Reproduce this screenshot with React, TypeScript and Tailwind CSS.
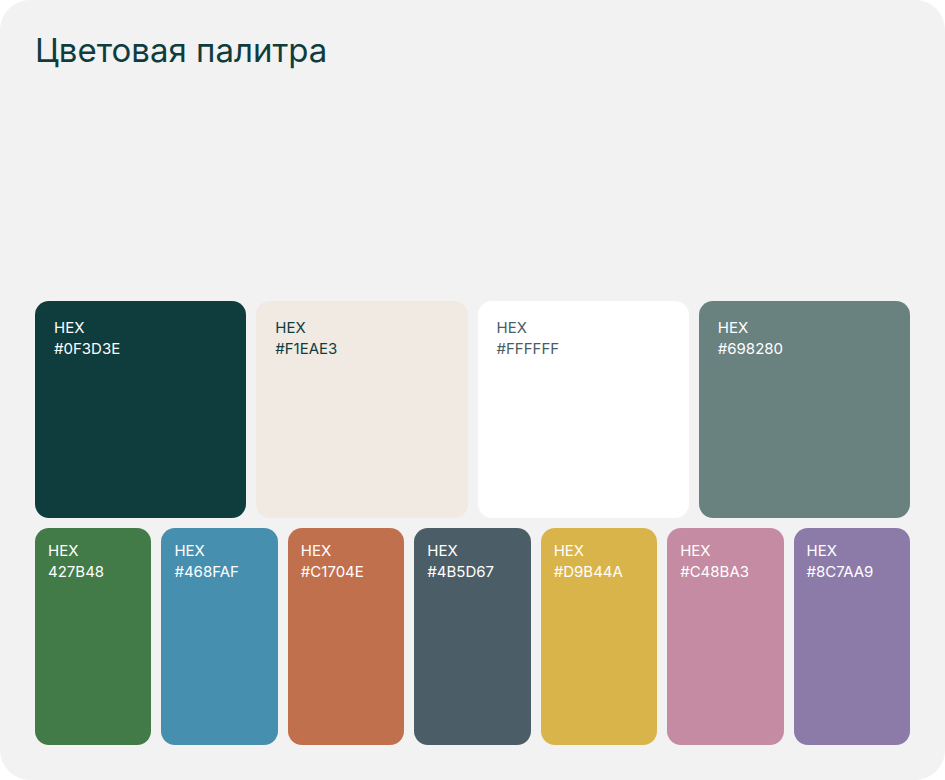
const top = [
  { hex: "#0F3D3E", bg: "bg-[#0f3d3e]", text: "text-white" },
  { hex: "#F1EAE3", bg: "bg-[#f1eae3]", text: "text-[#0f3d3e]" },
  { hex: "#FFFFFF", bg: "bg-white", text: "text-[#4b5d67]" },
  { hex: "#698280", bg: "bg-[#698280]", text: "text-white" },
];

const bottom = [
  { hex: "427B48", bg: "bg-[#427b48]" },
  { hex: "#468FAF", bg: "bg-[#468faf]" },
  { hex: "#C1704E", bg: "bg-[#c1704e]" },
  { hex: "#4B5D67", bg: "bg-[#4b5d67]" },
  { hex: "#D9B44A", bg: "bg-[#d9b44a]" },
  { hex: "#C48BA3", bg: "bg-[#c48ba3]" },
  { hex: "#8C7AA9", bg: "bg-[#8c7aa9]" },
];

export default function App() {
  return (
    <div className="w-[945px] h-[780px] bg-white" style={{ fontFamily: "Inter, 'Noto Sans', sans-serif" }}>
      <div className="h-full rounded-[30px] bg-[#f2f2f2] px-[35px] pb-[35px] pt-[30px] flex flex-col">
        <h1 className="text-[33px] leading-[40px] text-[#0f3d3e] font-normal">Цветовая палитра</h1>
        <div className="flex-1" />
        <div className="grid grid-cols-4 gap-[10px]">
          {top.map((c) => (
            <div key={c.hex} className={`${c.bg} ${c.text} h-[217px] rounded-[14px] px-[19px] pt-[16px] text-[15px] leading-[21px]`}>
              <div>HEX</div>
              <div>{c.hex}</div>
            </div>
          ))}
        </div>
        <div className="grid grid-cols-7 gap-[10px] mt-[10px]">
          {bottom.map((c) => (
            <div key={c.hex} className={`${c.bg} text-white h-[217px] rounded-[14px] px-[13px] pt-[12px] text-[15px] leading-[21px]`}>
              <div>HEX</div>
              <div>{c.hex}</div>
            </div>
          ))}
        </div>
      </div>
    </div>
  );
}
